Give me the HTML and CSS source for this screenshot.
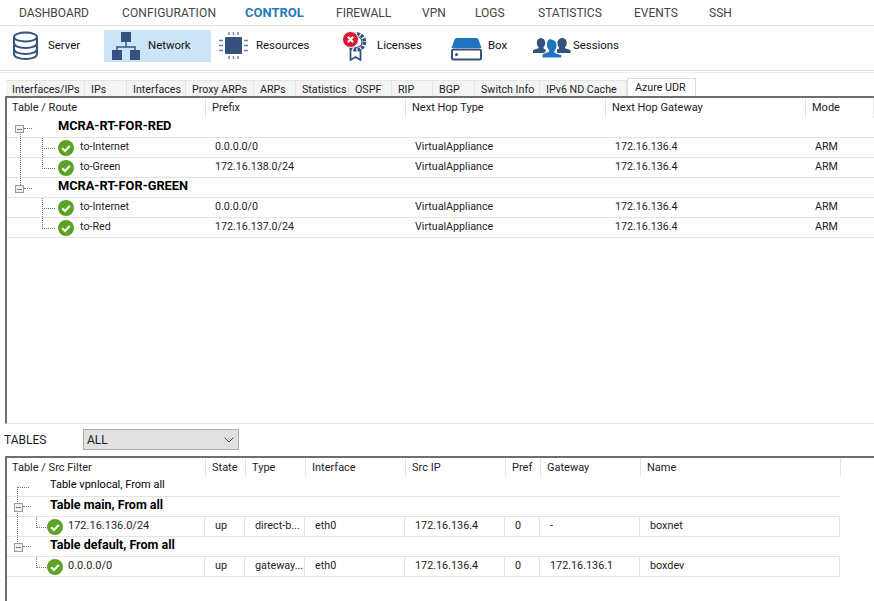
FILE: index.html
```html
<!DOCTYPE html>
<html lang="en">
<head>
    <meta charset="UTF-8">
    <meta name="viewport" content="width=device-width, initial-scale=1.0">
    <title>Control - Network</title>
    <link rel="stylesheet" href="styles.css">
</head>
<body>
    <svg class="defs" width="0" height="0">
        <symbol id="ok" viewBox="0 0 16 16">
            <circle cx="8" cy="8" r="8" fill="#5ba423"/>
            <path d="M4.2 8.2l2.8 2.8 4.8-5" fill="none" stroke="#fff" stroke-width="2.2"/>
        </symbol>
    </svg>

    <nav class="menu">
        <a class="m-dashboard">DASHBOARD</a>
        <a class="m-config">CONFIGURATION</a>
        <a class="m-control active">CONTROL</a>
        <a class="m-firewall">FIREWALL</a>
        <a class="m-vpn">VPN</a>
        <a class="m-logs">LOGS</a>
        <a class="m-stats">STATISTICS</a>
        <a class="m-events">EVENTS</a>
        <a class="m-ssh">SSH</a>
    </nav>

    <div class="toolbar">
        <div class="tool t-server">
            <svg class="ico-server" viewBox="0 0 35 32" fill="none" stroke="#35527f" stroke-width="2">
                <ellipse cx="12.5" cy="7" rx="11.5" ry="4.5"/>
                <path d="M1 7v17c0 3 5 5 11.5 5s11.5-2 11.5-5V7"/>
                <path d="M1 13c0 3 5 5 11.5 5s11.5-2 11.5-5"/>
                <path d="M1 19c0 3 5 5 11.5 5s11.5-2 11.5-5"/>
            </svg>
            <span>Server</span>
        </div>
        <div class="tool t-network active">
            <svg class="ico-network" viewBox="0 0 36 32">
                <path d="M14 12v5M5 20v-3h18v3" fill="none" stroke="#35527f" stroke-width="1.5"/>
                <path d="M9 2h10v10H9zM0 20h10v10H0zM18 20h10v10H18z" fill="#35527f"/>
            </svg>
            <span>Network</span>
        </div>
        <div class="tool t-resources">
            <svg class="ico-resources" viewBox="0 0 37 32">
                <path d="M10 2v3M14.500 2v3M19 2v3M10 26v3M14.500 26v3M19 26v3M0 10.500h4M0 15.500h4M0 20.500h4M25 10.500h4M25 15.500h4M25 20.500h4" fill="none" stroke="#6c82a5" stroke-width="1.400"/>
                <rect x="6" y="7" width="17" height="17" rx="1" fill="#35527f"/>
            </svg>
            <span>Resources</span>
        </div>
        <div class="tool t-licenses">
            <svg class="ico-licenses" viewBox="0 0 34 32">
                <path d="M7.500 19v11l5-3 5 3V19" fill="#fff" stroke="#35527f" stroke-width="1.800"/>
                <circle cx="13.500" cy="12" r="8" fill="#fff" stroke="#35527f" stroke-width="3.500" stroke-dasharray="3 1.200"/>
                <circle cx="13.500" cy="12" r="5.500" fill="none" stroke="#35527f" stroke-width="1.200"/>
                <circle cx="7.500" cy="9.500" r="8" fill="#d8182f" stroke="#fff" stroke-width="1"/>
                <path d="M4.800 6.800l5.400 5.400M10.200 6.800l-5.400 5.400" stroke="#fff" stroke-width="2.200"/>
            </svg>
            <span>Licenses</span>
        </div>
        <div class="tool t-box">
            <svg class="ico-box" viewBox="0 0 37 32">
                <path d="M0.500 18L3.500 9.500Q4 8 6 8H25Q27 8 27.500 9.500L30.500 18z" fill="#1f74bd"/>
                <rect x="1" y="19.500" width="29" height="10" rx="1.500" fill="#fff" stroke="#35527f" stroke-width="2"/>
                <circle cx="5.500" cy="24.500" r="1.500" fill="#35527f"/>
            </svg>
            <span>Box</span>
        </div>
        <div class="tool t-sessions">
            <svg class="ico-sessions" viewBox="0 0 40 32">
                <path d="M8 8c2.800 0 4.200 2.200 4.200 4.800 0 2-.7 3.500-1.700 4.500v1.200l2 1V23H0v-2.700c1.200-.8 3.500-1.300 5.500-2V17.300c-1-1-1.700-2.500-1.700-4.500C3.800 10.200 5.200 8 8 8z" fill="#35527f"/>
                <path d="M29.500 8c2.800 0 4.200 2.200 4.200 4.800 0 2-.7 3.500-1.700 4.500v1c2 .7 4.300 1.200 5.500 2V23H24v-3.500l2-1v-1.200c-1-1-1.700-2.500-1.700-4.500C24.300 10.200 26.700 8 29.500 8z" fill="#35527f"/>
                <path d="M18.700 9.500c3.500 0 5.300 2.700 5.300 6 0 2.500-.9 4.400-2.200 5.600v1.400c2.700 1 5.500 1.600 7 2.700V28H9v-3.800c1.500-1.100 4.300-1.700 6.600-2.700v-1.400c-1.300-1.200-2.200-3.100-2.200-5.600 0-3.300 1.800-6 5.300-6z" fill="#1f74bd" stroke="#fff" stroke-width="1"/>
            </svg>
            <span>Sessions</span>
        </div>
    </div>

    <div class="tabs">
        <div class="tab">Interfaces/IPs</div>
        <div class="tab">IPs</div>
        <div class="tab">Interfaces</div>
        <div class="tab">Proxy ARPs</div>
        <div class="tab">ARPs</div>
        <div class="tab">Statistics</div>
        <div class="tab">OSPF</div>
        <div class="tab">RIP</div>
        <div class="tab">BGP</div>
        <div class="tab">Switch Info</div>
        <div class="tab">IPv6 ND Cache</div>
        <div class="tab current">Azure UDR</div>
    </div>

    <section class="pane routes">
        <div class="head">
            <div>Table / Route</div>
            <div>Prefix</div>
            <div>Next Hop Type</div>
            <div>Next Hop Gateway</div>
            <div>Mode</div>
        </div>
        <div class="row group"><i class="exp"></i><b>MCRA-RT-FOR-RED</b></div>
        <div class="row leaf first">
            <div class="name"><svg class="ok"><use href="#ok"/></svg>to-Internet</div>
            <div>0.0.0.0/0</div><div>VirtualAppliance</div><div>172.16.136.4</div><div>ARM</div>
        </div>
        <div class="row leaf">
            <div class="name"><svg class="ok"><use href="#ok"/></svg>to-Green</div>
            <div>172.16.138.0/24</div><div>VirtualAppliance</div><div>172.16.136.4</div><div>ARM</div>
        </div>
        <div class="row group spine"><i class="exp"></i><b>MCRA-RT-FOR-GREEN</b></div>
        <div class="row leaf first">
            <div class="name"><svg class="ok"><use href="#ok"/></svg>to-Internet</div>
            <div>0.0.0.0/0</div><div>VirtualAppliance</div><div>172.16.136.4</div><div>ARM</div>
        </div>
        <div class="row leaf">
            <div class="name"><svg class="ok"><use href="#ok"/></svg>to-Red</div>
            <div>172.16.137.0/24</div><div>VirtualAppliance</div><div>172.16.136.4</div><div>ARM</div>
        </div>
    </section>

    <div class="filter">
        <label>TABLES</label>
        <div class="select">
            <span>ALL</span>
            <svg width="10" height="6" viewBox="0 0 10 6"><path d="M.5.500L5 5 9.500.500" fill="none" stroke="#444" stroke-width="1"/></svg>
        </div>
    </div>

    <section class="pane filters">
        <div class="head">
            <div>Table / Src Filter</div>
            <div>State</div>
            <div>Type</div>
            <div>Interface</div>
            <div>Src IP</div>
            <div>Pref</div>
            <div>Gateway</div>
            <div>Name</div>
        </div>
        <div class="row group plain">Table vpnlocal, From all</div>
        <div class="row group"><i class="exp"></i><b>Table main, From all</b></div>
        <div class="row leaf">
            <div class="name"><svg class="ok"><use href="#ok"/></svg>172.16.136.0/24</div>
            <div>up</div><div>direct-b...</div><div>eth0</div><div>172.16.136.4</div><div>0</div><div>-</div><div>boxnet</div>
        </div>
        <div class="row group"><i class="exp"></i><b>Table default, From all</b></div>
        <div class="row leaf">
            <div class="name"><svg class="ok"><use href="#ok"/></svg>0.0.0.0/0</div>
            <div>up</div><div>gateway...</div><div>eth0</div><div>172.16.136.4</div><div>0</div><div>172.16.136.1</div><div>boxdev</div>
        </div>
    </section>
</body>
</html>
```

FILE: styles.css
```css
body {
    font-family: Roboto, "Liberation Sans", sans-serif;
    font-size: 11px;
    color: #1c1c28;
    background-color: #fff;
    margin: 0;
    height: 601px;
    overflow: hidden;
}
.defs {
    position: absolute;
}

/* top menu */
.menu {
    display: flex;
    align-items: center;
    box-sizing: border-box;
    height: 26px;
    padding-left: 19px;
    border-bottom: 1px solid #e3e3e3;
    font-size: 12px;
    color: #444;
}
.menu a {
    white-space: nowrap;
}
.m-dashboard { width: 103px; }
.m-config { width: 123px; letter-spacing: 0.15px; }
.m-control { width: 91px; }
.m-firewall { width: 86px; }
.m-vpn { width: 53px; }
.m-logs { width: 63px; }
.m-stats { width: 96px; }
.m-events { width: 75px; }
.menu .active {
    color: #2a7ab9;
    font-weight: bold;
    font-size: 13px;
}

/* icon toolbar */
.toolbar {
    display: flex;
    box-sizing: border-box;
    height: 45px;
    padding: 4px 0 0 5px;
    border-bottom: 1px solid #e3e3e3;
    font-size: 11.4px;
}
.tool {
    display: flex;
    align-items: center;
    box-sizing: border-box;
    height: 32px;
    padding-left: 8px;
    color: #111;
}
.tool svg {
    height: 32px;
}
.tool span {
    padding-bottom: 2px;
}
.tool.active {
    background-color: #cce4f7;
}
.t-server { width: 99px; }
.t-network { width: 107px; }
.t-resources { width: 124px; }
.t-licenses { width: 108px; }
.t-box { width: 82px; }
.ico-server { width: 35px; }
.ico-network { width: 36px; }
.ico-resources { width: 37px; }
.ico-licenses { width: 34px; }
.ico-box { width: 37px; }
.ico-sessions { width: 40px; }

/* tab strip */
.tabs {
    display: grid;
    grid-template-columns: 79px 42px 59px 68px 42px 53px 43px 41px 42px 65px 87px 69px;
    align-items: end;
    box-sizing: border-box;
    height: 24px;
    padding-left: 6px;
    border-top: 1px solid #ececec;
    margin-top: 1px;
}
.tab {
    box-sizing: border-box;
    height: 16px;
    line-height: 18px;
    padding-left: 6px;
    background-color: #f4f4f4;
    border: 1px solid #e4e4e4;
    border-bottom: none;
    border-left: none;
    font-size: 10.7px;
    white-space: nowrap;
    overflow: hidden;
}
.tab.current {
    height: 18px;
    line-height: 17px;
    padding-left: 7px;
    background-color: #fff;
    border: 1px solid #d9d9d9;
    border-bottom: none;
}

/* tree tables */
.pane {
    box-sizing: border-box;
    margin-left: 5px;
    border-top: 2px solid #6e6e6e;
    border-left: 2px solid #6e6e6e;
}
.routes {
    height: 328px;
    border-bottom: 1px solid #e3e3e3;
}
.filters {
    height: 145px;
}
.head,
.row {
    display: grid;
    box-sizing: border-box;
}
.routes .head {
    grid-template-columns: 199px 200px 200px 200px 68px;
}
.routes .row {
    grid-template-columns: 198px 200px 200px 200px 69px;
    font-size: 10.7px;
    line-height: 18px;
}
.routes .row.group {
    line-height: 16px;
}
.filters .head {
    width: 834px;
    grid-template-columns: 199px 40px 60px 100px 100px 35px 100px 200px;
}
.filters .row {
    width: 833px;
    grid-template-columns: 198px 40px 60px 100px 100px 35px 100px 200px;
}
.head {
    height: 20px;
    line-height: 19px;
}
.filters .head {
    height: 19px;
}
.head div {
    padding-left: 6px;
    border-right: 1px solid #e5e5e5;
}
.head div:first-child {
    padding-left: 5px;
}
.row {
    position: relative;
    height: 20px;
    line-height: 16px;
    border-bottom: 1px solid #e3e3e3;
}
.row > div {
    padding-left: 10px;
    white-space: nowrap;
}
.row.group {
    display: block;
    padding-left: 51px;
    color: #000;
}
.row b {
    font-size: 12.800px;
}
.filters .row b {
    font-size: 12.500px;
}
.filters .row.group {
    padding-left: 43px;
}
.filters .leaf {
    line-height: 17px;
    font-size: 10.8px;
}
.filters .leaf > div {
    border-right: 1px solid #e3e3e3;
}
.row .name {
    display: flex;
    padding-left: 51px;
}
.filters .row .name {
    padding-left: 40px;
    font-size: 11px;
}
.ok {
    flex: none;
    width: 16px;
    height: 16px;
    margin: 1.500px 6px 0 0;
}
.filters .ok {
    margin: 2px 5px 0 0;
}

/* dotted tree lines and the minus boxes */
.exp {
    position: absolute;
    left: 8px;
    top: 7px;
    z-index: 1;
    box-sizing: border-box;
    width: 9px;
    height: 8px;
    background: linear-gradient(#6a7f96, #6a7f96) center / 5px 1px no-repeat #eef1f4;
    border: 1px solid #9a9a9a;
}
.exp::after {
    content: "";
    position: absolute;
    left: 8px;
    top: 2px;
    width: 8px;
    border-top: 1px dotted #777;
}
.filters .exp {
    left: 7px;
    top: 6px;
    height: 9px;
}
.spine::before {
    content: "";
    position: absolute;
    left: 13px;
    top: -53px;
    height: 60px;
    border-left: 1px dotted #777;
}
.leaf::before {
    content: "";
    position: absolute;
    left: 35px;
    top: -10px;
    width: 12px;
    height: 20px;
    border-left: 1px dotted #777;
    border-bottom: 1px dotted #777;
}
.leaf.first::before {
    top: 0;
    height: 10px;
}
.filters .leaf::before {
    left: 29px;
    top: 0;
    width: 11px;
    height: 10px;
}
.plain::before {
    content: "";
    position: absolute;
    left: 10px;
    top: 10px;
    width: 11px;
    height: 56px;
    border-left: 1px dotted #777;
    border-top: 1px dotted #777;
}

/* tables dropdown */
.filter {
    display: flex;
    box-sizing: border-box;
    height: 32px;
    padding: 5px 0 0 4px;
    font-size: 12px;
}
.filter label {
    width: 79px;
    line-height: 22px;
}
.select {
    display: flex;
    align-items: center;
    justify-content: space-between;
    box-sizing: border-box;
    width: 156px;
    height: 21px;
    padding: 0 4px 0 3px;
    background-color: #e1e1e1;
    border: 1px solid #adadad;
}
```
